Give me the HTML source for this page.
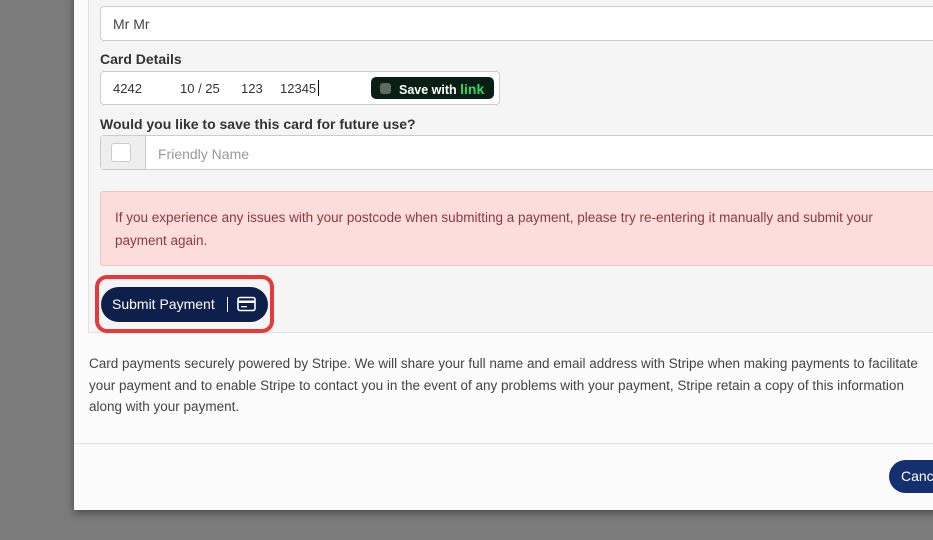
<!DOCTYPE html>
<html><head><style>
*{box-sizing:border-box;margin:0;padding:0}
body{width:933px;height:540px;background:#7b7b7b;position:relative;overflow:hidden;font-family:"Liberation Sans",sans-serif;color:#333}
.modal{position:absolute;left:74px;top:-10px;width:880px;height:520px;background:#fbfbfb;box-shadow:0 3px 8px rgba(0,0,0,.4)}
.panel{position:absolute;left:88px;top:-5px;width:860px;height:338px;background:#f5f5f5;border:1px solid #e2e2e2}
.abs{position:absolute;white-space:nowrap}
.input{background:#fff;border:1px solid #ccc;border-radius:4px}
.lbl{font-weight:bold;font-size:14px;color:#333}
.cn{font-size:13px;color:#333;top:81px}
</style></head><body>
<div class="modal"></div>
<div class="panel"></div>
<div class="abs input" style="left:100px;top:6px;width:850px;height:35px"></div>
<div class="abs" style="left:113px;top:16px;font-size:14px;color:#444">Mr Mr</div>
<div class="abs lbl" style="left:100px;top:51px">Card Details</div>
<div class="abs input" style="left:100px;top:71px;width:400px;height:34px"></div>
<div class="abs cn" style="left:113px">4242</div>
<div class="abs cn" style="left:180px">10 / 25</div>
<div class="abs cn" style="left:241px">123</div>
<div class="abs cn" style="left:280px">12345</div>
<div class="abs" style="left:318px;top:80px;width:1px;height:16px;background:#000"></div>
<div class="abs" style="left:371px;top:77px;width:123px;height:22px;background:#0a1f14;border-radius:5px"></div>
<div class="abs" style="left:380px;top:83px;width:11px;height:11px;background:#5c6a62;border-radius:3px"></div>
<div class="abs" style="left:399px;top:81px;font-size:12.5px;font-weight:bold;color:#fff">Save with <span style="color:#33d66a;font-size:14px">link</span></div>
<div class="abs lbl" style="left:100px;top:116px">Would you like to save this card for future use?</div>
<div class="abs input" style="left:100px;top:135px;width:850px;height:35px"></div>
<div class="abs" style="left:101px;top:136px;width:45px;height:33px;background:#eee;border-right:1px solid #ccc"></div>
<div class="abs" style="left:111px;top:143px;width:20px;height:19px;background:#fff;border:1px solid #ccc;border-radius:3px"></div>
<div class="abs" style="left:158px;top:146px;font-size:14px;color:#999">Friendly Name</div>
<div class="abs" style="left:100px;top:191px;width:850px;height:75px;background:#fddcdc;border:1px solid #f3c4c4;border-radius:3px"></div>
<div class="abs" style="left:115px;top:206px;font-size:13.5px;line-height:23px;color:#8a3b3b">If you experience any issues with your postcode when submitting a payment, please try re-entering it manually and submit your<br>payment again.</div>
<div class="abs" style="left:95px;top:275px;width:179px;height:58px;border:4px solid #e8383a;border-radius:12px"></div>
<div class="abs" style="left:101px;top:287px;width:167px;height:35px;background:#0f1f4b;border-radius:18px"></div>
<div class="abs" style="left:112px;top:296px;font-size:14px;color:#fff">Submit Payment</div>
<div class="abs" style="left:227px;top:297px;width:1px;height:15px;background:#fff"></div>
<svg class="abs" style="left:237px;top:296px" width="19" height="16" viewBox="0 0 19 16"><rect x="1" y="1.5" width="17" height="13" rx="2" fill="none" stroke="#fff" stroke-width="1.6"/><rect x="1" y="4.5" width="17" height="2.5" fill="#fff"/><rect x="4" y="10" width="6" height="1.3" fill="#fff"/></svg>
<div class="abs" style="left:89px;top:353px;font-size:13.5px;line-height:21.5px;color:#444">Card payments securely powered by Stripe. We will share your full name and email address with Stripe when making payments to facilitate<br>your payment and to enable Stripe to contact you in the event of any problems with your payment, Stripe retain a copy of this information<br>along with your payment.</div>
<div class="abs" style="left:74px;top:443px;width:860px;height:1px;background:#e3e3e3"></div>
<div class="abs" style="left:889px;top:460px;width:80px;height:33px;background:#14306f;border-radius:17px"></div>
<div class="abs" style="left:901px;top:468px;font-size:14px;color:#fff">Cancel</div>
</body></html>
